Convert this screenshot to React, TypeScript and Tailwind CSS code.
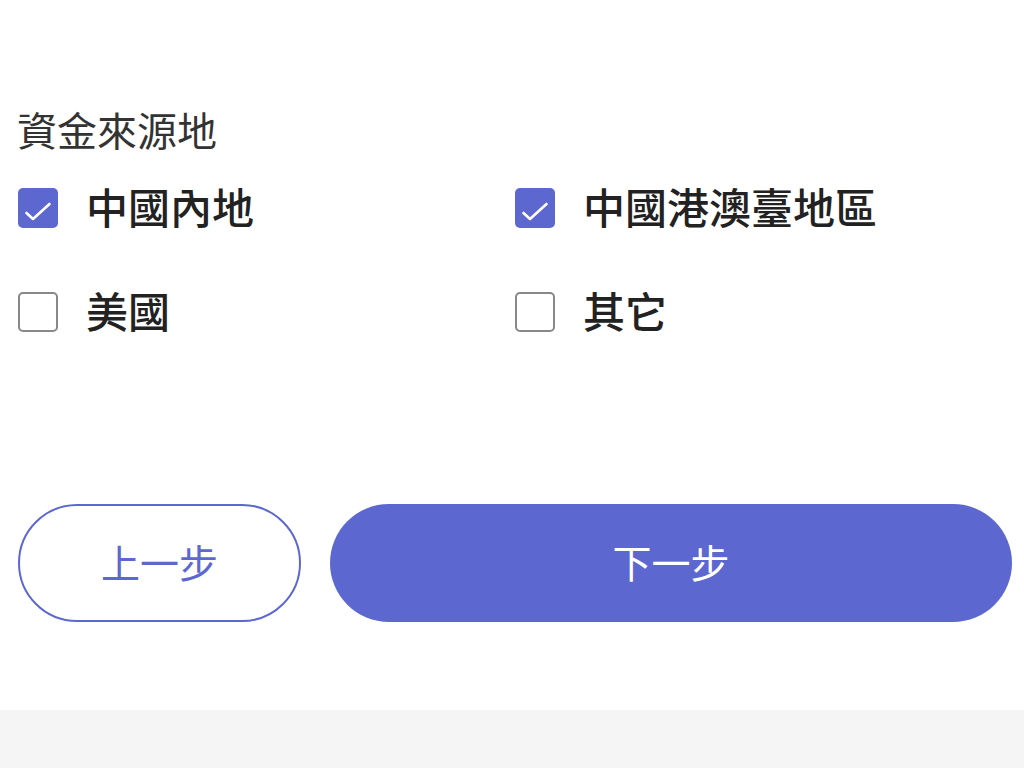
import { useState } from "react";

const options = [
  { label: "中國內地", checked: true },
  { label: "中國港澳臺地區", checked: true },
  { label: "美國", checked: false },
  { label: "其它", checked: false },
];

function Checkbox({ checked }: { checked: boolean }) {
  return checked ? (
    <div className="w-10 h-10 rounded-[5px] bg-[#5d67d0] flex items-center justify-center shrink-0">
      <svg width="40" height="40" viewBox="0 0 40 40" fill="none">
        <polyline points="8.5,25 15,31 31.5,16" stroke="white" strokeWidth="2.6" strokeLinecap="round" strokeLinejoin="round" />
      </svg>
    </div>
  ) : (
    <div className="w-10 h-10 rounded-[5px] border-2 border-[#888888] bg-white shrink-0" />
  );
}

export default function App() {
  const [state, setState] = useState(options);
  const toggle = (i: number) =>
    setState((s) => s.map((o, j) => (j === i ? { ...o, checked: !o.checked } : o)));

  return (
    <div className="min-h-[768px] bg-[#f5f5f5] font-['Noto_Sans_CJK_TC','Noto_Sans',sans-serif]">
      <div className="bg-white pt-[109px] pb-[88px] pl-[18px] pr-[12px]">
        <div className="text-[40px] leading-[40px] text-[#333333] -ml-[1px]">資金來源地</div>

        <div className="mt-[39px] grid grid-cols-2 gap-y-[64px]">
          {state.map((o, i) => (
            <button key={o.label} onClick={() => toggle(i)} className="flex items-center gap-[28px] h-10 text-left">
              <Checkbox checked={o.checked} />
              <span className="text-[42px] leading-none font-medium text-[#222222] pb-[4px]">{o.label}</span>
            </button>
          ))}
        </div>

        <div className="mt-[172px] flex gap-[29px]">
          <button className="w-[283px] h-[118px] rounded-full border-2 border-[#5d67d0] text-[#5d67d0] text-[39px] bg-white pb-[4px]">
            上一步
          </button>
          <button className="flex-1 h-[118px] rounded-full bg-[#5d67d0] text-white text-[39px] pb-[4px]">
            下一步
          </button>
        </div>
      </div>
    </div>
  );
}
